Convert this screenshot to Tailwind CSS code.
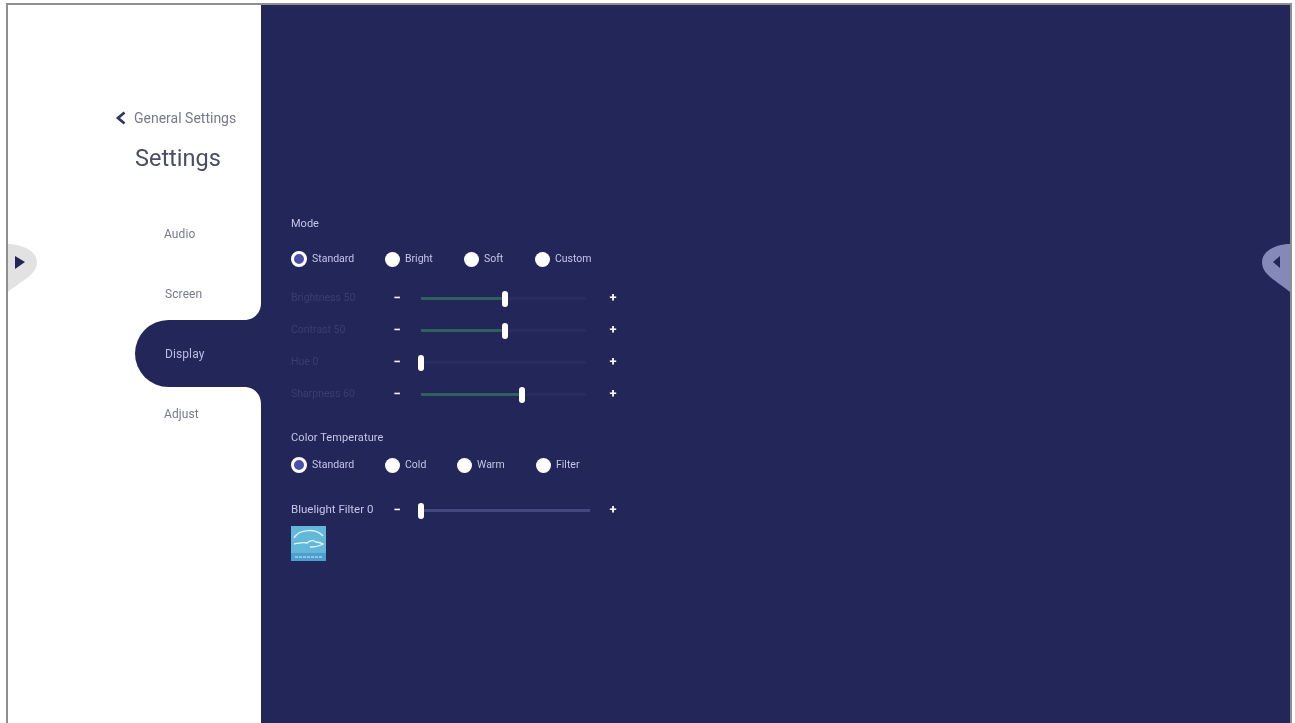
<!DOCTYPE html>
<html lang="en">
  <head>
    <meta charset="UTF-8" />
    <title>Settings</title>
    <script src="https://cdn.jsdelivr.net/npm/@tailwindcss/browser@4"></script>
  </head>
  <body class="bg-white font-['Roboto',sans-serif] h-[723px] overflow-hidden pt-[3px]">
    <!-- Frame -->
    <div class="relative flex h-[720px] ml-[6px] mr-[3px] border-x-2 border-t-2 border-[#8f8f8f] overflow-hidden blur-[0.4px]">
      <!-- Sidebar -->
      <aside class="w-[253px] shrink-0 bg-white pt-[103px] text-gray-500">
        <div class="flex items-center h-[20px] pl-[107px] gap-[7px]">
          <svg width="12" height="14" viewBox="0 0 12 14"><path d="M9.500 1.500 3 7l6.500 5.500" fill="none" stroke="#34365f" stroke-width="2.800" /></svg>
          <span class="text-[14px] whitespace-nowrap text-[#77798a]">General Settings</span>
        </div>
        <h1 class="h-[30px] mt-[15px] pl-[127px] text-[23.500px] leading-[30px] text-[#4a4c68]">Settings</h1>
        <ul class="mt-[31px] text-[12px] tracking-[0.1px] text-[#77798a]">
          <li class="flex items-center h-[60px] pl-[156px]">Audio</li>
          <li class="flex items-center h-[56px] pl-[157px] pt-[4px]">Screen</li>
          <li class="relative flex items-center h-[67px] ml-[127px] pl-[30px] rounded-l-[34px] bg-[#222658] text-[#b9bde6]">
            Display
            <svg class="absolute right-0 -top-[17px]" width="17" height="17" viewBox="0 0 17 17"><path d="M17 0v17H0C10 17 17 10 17 0Z" fill="#222658" /></svg>
            <svg class="absolute right-0 -bottom-[17px]" width="17" height="17" viewBox="0 0 17 17"><path d="M17 17V0H0C10 0 17 7 17 17Z" fill="#222658" /></svg>
          </li>
          <li class="flex items-center h-[54px] pl-[156px]">Adjust</li>
        </ul>
      </aside>

      <!-- Display settings -->
      <main class="flex-1 bg-[#222658] pl-[30px] pt-[211px] text-[10.500px] text-[#c3c6e8]">
        <h2 class="flex items-center h-[16px] text-[11px]">Mode</h2>
        <div class="flex h-[16px] mt-[19px]">
          <label class="flex items-center gap-[5px] w-[94px]"><span class="w-[16px] h-[16px] rounded-full border-[3px] border-white bg-[#4a4fa8]"></span>Standard</label>
          <label class="flex items-center gap-[5px] w-[79px]"><span class="w-[15px] h-[15px] rounded-full bg-white"></span>Bright</label>
          <label class="flex items-center gap-[5px] w-[71px]"><span class="w-[15px] h-[15px] rounded-full bg-white"></span>Soft</label>
          <label class="flex items-center gap-[5px]"><span class="w-[15px] h-[15px] rounded-full bg-white"></span>Custom</label>
        </div>

        <div class="mt-[15px]">
          <div class="flex items-center h-[32px]">
            <span class="w-[99px] text-[#3b3e72]">Brightness 50</span>
            <span class="w-[14px] text-center text-[13px] font-bold text-white">−</span>
            <div class="relative w-[165px] h-[3px] ml-[17px] mr-[4px] bg-[#282c5f]">
              <div class="w-[84px] h-full bg-[#2f6062]"></div>
              <div class="absolute left-[81px] -top-[6px] w-[6px] h-[16px] rounded-[3px] bg-white"></div>
            </div>
            <span class="w-[14px] ml-[16px] text-center text-[13px] font-bold text-white">+</span>
          </div>
          <div class="flex items-center h-[32px]">
            <span class="w-[99px] text-[#3b3e72]">Contrast 50</span>
            <span class="w-[14px] text-center text-[13px] font-bold text-white">−</span>
            <div class="relative w-[165px] h-[3px] ml-[17px] mr-[4px] bg-[#282c5f]">
              <div class="w-[84px] h-full bg-[#2f6062]"></div>
              <div class="absolute left-[81px] -top-[6px] w-[6px] h-[16px] rounded-[3px] bg-white"></div>
            </div>
            <span class="w-[14px] ml-[16px] text-center text-[13px] font-bold text-white">+</span>
          </div>
          <div class="flex items-center h-[32px]">
            <span class="w-[99px] text-[#3b3e72]">Hue 0</span>
            <span class="w-[14px] text-center text-[13px] font-bold text-white">−</span>
            <div class="relative w-[165px] h-[3px] ml-[17px] mr-[4px] bg-[#282c5f]">
              <div class="absolute -left-[3px] -top-[6px] w-[6px] h-[16px] rounded-[3px] bg-white"></div>
            </div>
            <span class="w-[14px] ml-[16px] text-center text-[13px] font-bold text-white">+</span>
          </div>
          <div class="flex items-center h-[32px]">
            <span class="w-[99px] text-[#3b3e72]">Sharpness 60</span>
            <span class="w-[14px] text-center text-[13px] font-bold text-white">−</span>
            <div class="relative w-[165px] h-[3px] ml-[17px] mr-[4px] bg-[#282c5f]">
              <div class="w-[101px] h-full bg-[#2f6062]"></div>
              <div class="absolute left-[98px] -top-[6px] w-[6px] h-[16px] rounded-[3px] bg-white"></div>
            </div>
            <span class="w-[14px] ml-[16px] text-center text-[13px] font-bold text-white">+</span>
          </div>
        </div>

        <h2 class="flex items-center h-[16px] mt-[20px] text-[11px] tracking-[0.1px]">Color Temperature</h2>
        <div class="flex h-[16px] mt-[11px]">
          <label class="flex items-center gap-[5px] w-[94px]"><span class="w-[16px] h-[16px] rounded-full border-[3px] border-white bg-[#4a4fa8]"></span>Standard</label>
          <label class="flex items-center gap-[5px] w-[72px]"><span class="w-[15px] h-[15px] rounded-full bg-white"></span>Cold</label>
          <label class="flex items-center gap-[5px] w-[79px]"><span class="w-[15px] h-[15px] rounded-full bg-white"></span>Warm</label>
          <label class="flex items-center gap-[5px]"><span class="w-[15px] h-[15px] rounded-full bg-white"></span>Filter</label>
        </div>

        <div class="flex items-center h-[32px] mt-[21px]">
          <span class="w-[99px] text-[11.500px] whitespace-nowrap text-[#c3c6e8]">Bluelight Filter 0</span>
          <span class="w-[14px] text-center text-[13px] font-bold text-white">−</span>
          <div class="relative w-[169px] h-[3px] ml-[17px] bg-[#44477f]">
            <div class="absolute -left-[3px] -top-[6px] w-[6px] h-[16px] rounded-[3px] bg-white"></div>
          </div>
          <span class="w-[14px] ml-[16px] text-center text-[13px] font-bold text-white">+</span>
        </div>

        <!-- Energy Star mark -->
        <svg width="35" height="35" viewBox="0 0 35 35" class="block">
          <rect width="35" height="35" fill="#63b7d8" />
          <rect x="0" y="27" width="35" height="8" fill="#4c9fd0" />
          <path d="M3 12C8 3 25 2 32 10" fill="none" stroke="#d8f0f8" stroke-width="1.500" />
          <path d="M3 18c6-1 9-2 13-1 3-3 7-3 9-1 2 0 5 1 7 2-5 3-9 3-13 3" fill="none" stroke="#e6f6fb" stroke-width="1.300" />
          <path d="M4 31h27" stroke="#d8f0f8" stroke-width="1" stroke-dasharray="3 1" />
        </svg>
      </main>

      <!-- Side handles -->
      <svg class="absolute left-0 top-[237px]" width="30" height="50" viewBox="0 0 30 50"><path d="M0 2C14 2 29 9 29 20 29 33 14 38 0 50Z" fill="#e2e2e2" /><path d="M7 14 17 20 7 27Z" fill="#222658" /></svg>
      <svg class="absolute right-0 top-[237px]" width="28" height="50" viewBox="0 0 28 50"><path d="M28 2C14 2 0 9 0 20 0 33 14 38 28 50Z" fill="#8489b9" /><path d="M18 14 11 20 18 26Z" fill="#222658" /></svg>
    </div>
  </body>
</html>
